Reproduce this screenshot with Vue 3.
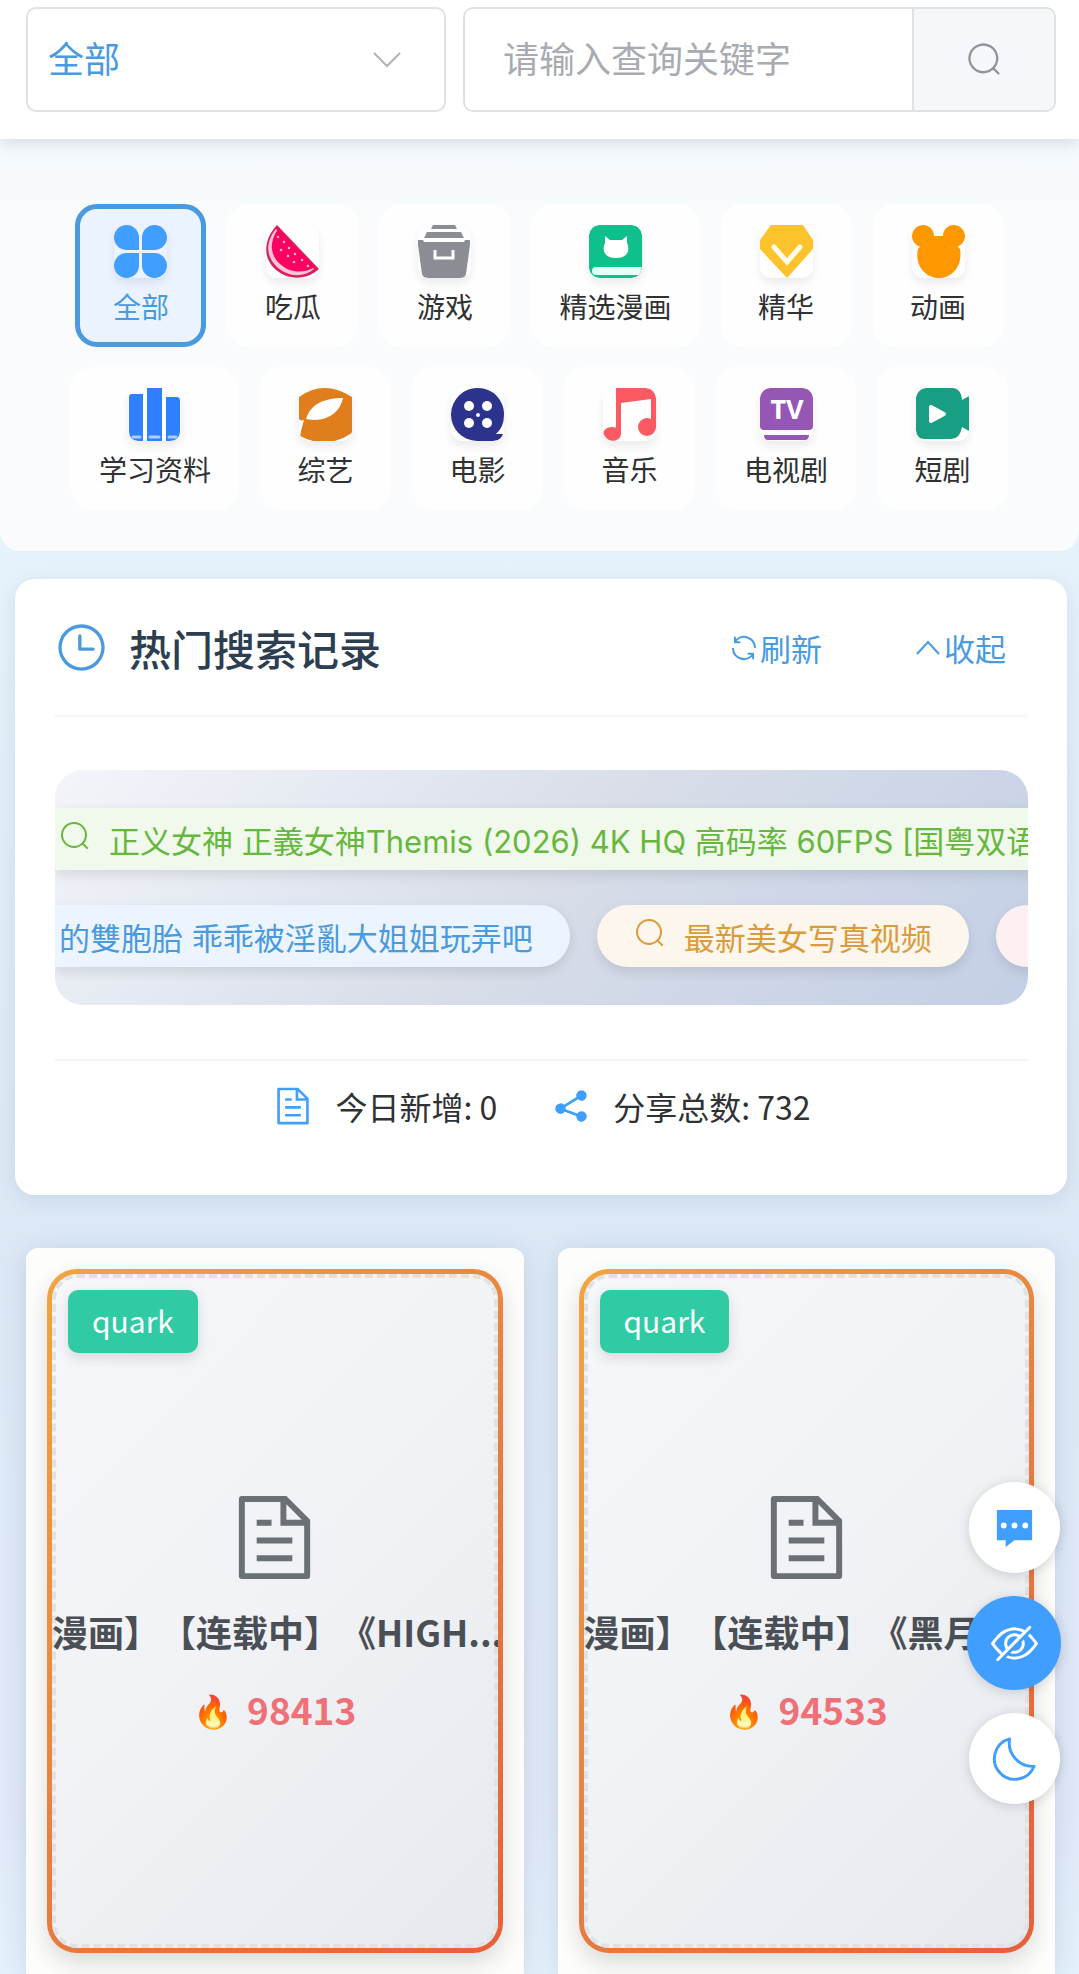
<template>
  <div class="page">
    <header class="search-bar">
      <div class="type-select">
        <select v-model="searchType" aria-label="分类">
          <option value="all">全部</option>
          <option v-for="c in categories.slice(1)" :key="c.icon" :value="c.icon">{{ c.name }}</option>
        </select>
        <svg class="select-arrow" viewBox="0 0 32 32"><path d="M3 9l13 13L29 9" /></svg>
      </div>
      <form class="search-box" @submit.prevent>
        <input v-model="keyword" type="text" placeholder="请输入查询关键字" aria-label="查询关键字">
        <button type="submit" aria-label="搜索">
          <svg viewBox="0 0 1024 1024"><path :d="paths.search" /></svg>
        </button>
      </form>
    </header>

    <nav class="categories">
      <button
        v-for="c in categories"
        :key="c.icon"
        class="category"
        :class="{ active: c.icon === current }"
        @click="current = c.icon"
      >
        <svg v-if="c.icon === 'all'" class="category-icon" viewBox="0 0 53 53" fill="#409eff">
          <path d="M25 25H12A12.500 12.500 0 1 1 25 12zM28 25V12A12.500 12.500 0 1 1 41 25zM25 28V41A12.500 12.500 0 1 1 12 28zM28 28H41A12.500 12.500 0 1 1 28 41z" />
        </svg>
        <svg v-else-if="c.icon === 'melon'" class="category-icon" viewBox="0 0 53 53">
          <path d="M11 0C-3 15-3 33 9 44s31 12 44 0z" fill="#d81e5b" />
          <path d="M10 4C-1 17 0 32 11 42s26 11 37 2z" fill="#ffc4d6" />
          <path d="M12 4C3 17 4 30 14 39s23 10 35 3z" fill="#fb0060" />
          <g fill="#ffb3cd">
            <circle cx="12" cy="12" r="1.300" /><circle cx="18" cy="17" r="1.300" /><circle cx="15" cy="25" r="1.300" />
            <circle cx="23" cy="23" r="1.300" /><circle cx="22" cy="31" r="1.300" /><circle cx="29" cy="29" r="1.300" />
            <circle cx="28" cy="37" r="1.300" /><circle cx="36" cy="35" r="1.300" /><circle cx="42" cy="41" r="1.300" />
          </g>
        </svg>
        <svg v-else-if="c.icon === 'game'" class="category-icon" viewBox="0 0 53 53" fill="#8a8e94">
          <path d="M15 0H37L39 4H13zM9 7H43L46 13H6z" />
          <path d="M6 13H46V16H6z" fill="#fff" />
          <path d="M0 15H5L6 17H46L47 15H52V20L48 49Q47 53 43 53H9Q5 53 4 49L0 20z" />
          <path d="M17 25V33H35V25" fill="none" stroke="#fff" stroke-width="3" />
        </svg>
        <svg v-else-if="c.icon === 'comic'" class="category-icon" viewBox="0 0 53 53">
          <rect width="53" height="53" rx="10" fill="#0fbf8c" />
          <path d="M16 11L21 15H33L38 11V18C42 27 37 33 27 33S12 27 16 18z" fill="#fff" />
          <path d="M53 42H7a4 4 0 0 0 0 8H51" fill="#e6fff6" />
        </svg>
        <svg v-else-if="c.icon === 'best'" class="category-icon" viewBox="0 0 53 53">
          <path d="M11 0H43L53 15V24L27 53L0 24V15z" fill="#fcc32c" />
          <path d="M14 22L27 37L40 22" fill="none" stroke="#fffbe8" stroke-width="5" stroke-linecap="round" />
        </svg>
        <svg v-else-if="c.icon === 'anime'" class="category-icon" viewBox="0 0 53 53" fill="#ff9800">
          <circle cx="11" cy="11" r="11" /><circle cx="42" cy="11" r="11" />
          <path d="M17 11H36L48 24C51 42 39 53 27 53S2 42 6 24z" />
        </svg>
        <svg v-else-if="c.icon === 'study'" class="category-icon" viewBox="0 0 53 53" fill="#2f80ff">
          <path d="M4 6H15V53H10Q1 53 1 43V9Q1 6 4 6zM19 0H34V53H19zM38 9H49Q52 9 52 13V43Q52 53 42 53H38z" />
          <path d="M5 49H12M22 49H31M41 49H48" stroke="#a9d0ff" stroke-width="3" stroke-linecap="round" />
        </svg>
        <svg v-else-if="c.icon === 'variety'" class="category-icon" viewBox="0 0 53 53">
          <path d="M0 9Q25-9 53 9V45Q28 62 1 48L4 34L0 31z" fill="#e07d1d" />
          <path d="M7 31C12 15 27 10 44 10C41 25 27 35 7 31zM0 33L5 32L2 42z" fill="#fff" />
        </svg>
        <svg v-else-if="c.icon === 'movie'" class="category-icon" viewBox="0 0 53 53">
          <path d="M27 0A26 26 0 0 1 53 27Q53 39 45 46H52Q51 53 42 53H26A26 26 0 0 1 27 0z" fill="#2b338c" />
          <g fill="#fff">
            <circle cx="18" cy="18" r="5" /><circle cx="36" cy="18" r="5" />
            <circle cx="18" cy="35" r="5" /><circle cx="36" cy="35" r="5" /><circle cx="27" cy="27" r="2" />
          </g>
        </svg>
        <svg v-else-if="c.icon === 'music'" class="category-icon" viewBox="0 0 53 53" fill="#fc5a62">
          <path d="M13 0H43Q53 0 53 10V40H48V11L18 15V46H13z" />
          <ellipse cx="9" cy="46" rx="9" ry="7" /><circle cx="44" cy="39" r="9" />
        </svg>
        <svg v-else-if="c.icon === 'tv'" class="category-icon" viewBox="0 0 53 53">
          <path d="M10 0H43Q53 0 53 10V38Q53 42 49 42H4Q0 42 0 38V10Q0 0 10 0zM4 47H49Q49 52 45 52H8Q4 52 4 47z" fill="#9556b4" />
          <text x="27" y="31" class="tv-text">TV</text>
        </svg>
        <svg v-else class="category-icon" viewBox="0 0 53 53">
          <path d="M9 0H36Q45 0 46 12L53 8V43L46 39Q44 51 35 51H9Q0 51 0 42V9Q0 0 9 0z" fill="#179e83" />
          <path d="M15 19L28 26L15 33z" fill="#fff" stroke="#fff" stroke-width="4" stroke-linejoin="round" />
        </svg>
        <span>{{ c.name }}</span>
      </button>
    </nav>

    <section class="hot">
      <div class="hot-header">
        <svg class="hot-clock" viewBox="0 0 1024 1024"><path :d="paths.clock" /></svg>
        <h2>热门搜索记录</h2>
        <button class="text-btn">
          <svg viewBox="0 0 1024 1024"><path :d="paths.refresh" /></svg>刷新
        </button>
        <button class="text-btn">
          <svg class="arrow-up" viewBox="0 0 32 32"><path d="M5 22L16 10L27 22" /></svg>收起
        </button>
      </div>
      <div class="marquee">
        <div class="marquee-row">
          <a href="#" class="tag green">
            <svg viewBox="0 0 1024 1024"><path :d="paths.search" /></svg>
            <span>正义女神 正義女神Themis (2026) 4K HQ 高码率 60FPS [国粤双语]</span>
          </a>
        </div>
        <div class="marquee-row">
          <a href="#" class="tag blue"><span>的雙胞胎 乖乖被淫亂大姐姐玩弄吧</span></a>
          <a href="#" class="tag orange">
            <svg viewBox="0 0 1024 1024"><path :d="paths.search" /></svg>
            <span>最新美女写真视频</span>
          </a>
          <a href="#" class="tag red" aria-label="更多"></a>
        </div>
      </div>
      <div class="stats">
        <div class="stat">
          <svg viewBox="0 0 1024 1024"><path :d="paths.document" /></svg>
          <span>今日新增: {{ todayCount }}</span>
        </div>
        <div class="stat">
          <svg viewBox="0 0 1024 1024"><path :d="paths.share" /></svg>
          <span>分享总数: {{ shareCount }}</span>
        </div>
      </div>
    </section>

    <main class="resources">
      <article v-for="r in resources" :key="r.id" class="resource">
        <div class="cover">
          <span class="badge">{{ r.source }}</span>
          <svg class="cover-icon" viewBox="0 0 1024 1024"><path :d="paths.document" /></svg>
          <h3>{{ r.title }}</h3>
          <p class="heat"><span class="fire">🔥</span>{{ r.heat }}</p>
        </div>
      </article>
    </main>

    <div class="float-actions">
      <button class="float-btn" aria-label="留言">
        <svg viewBox="0 0 48 48">
          <path d="M6 6H42V37H24L15 44V37H6z" />
          <g fill="#fff"><circle cx="13" cy="22" r="3" /><circle cx="24" cy="22" r="3" /><circle cx="35" cy="22" r="3" /></g>
        </svg>
      </button>
      <button class="float-btn primary" aria-label="隐藏图片">
        <svg viewBox="0 0 1024 1024"><path :d="paths.hide" /></svg>
      </button>
      <button class="float-btn" aria-label="夜间模式">
        <svg class="moon" viewBox="0 0 48 48"><path d="M19 4A21 21 0 1 0 44 32A24 24 0 0 1 19 4z" /></svg>
      </button>
    </div>
  </div>
</template>

<script setup>
import { ref } from 'vue'

const searchType = ref('all')
const keyword = ref('')
const current = ref('all')
const todayCount = ref(0)
const shareCount = ref(732)

const categories = [
  { icon: 'all', name: '全部' },
  { icon: 'melon', name: '吃瓜' },
  { icon: 'game', name: '游戏' },
  { icon: 'comic', name: '精选漫画' },
  { icon: 'best', name: '精华' },
  { icon: 'anime', name: '动画' },
  { icon: 'study', name: '学习资料' },
  { icon: 'variety', name: '综艺' },
  { icon: 'movie', name: '电影' },
  { icon: 'music', name: '音乐' },
  { icon: 'tv', name: '电视剧' },
  { icon: 'short', name: '短剧' }
]

const resources = [
  { id: 1, source: 'quark', title: '漫画】【连载中】《HIGH...', heat: 98413 },
  { id: 2, source: 'quark', title: '漫画】【连载中】《黑月...', heat: 94533 }
]

const paths = {
  search: 'M795.904 750.720l124.992 124.928a32 32 0 0 1-45.248 45.248L750.656 795.904a416 416 0 1 1 45.248-45.248zM480 832a352 352 0 1 0 0-704 352 352 0 0 0 0 704',
  clock: 'M512 896a384 384 0 1 0 0-768 384 384 0 0 0 0 768zm0 64a448 448 0 1 1 0-896 448 448 0 0 1 0 896zM480 256a32 32 0 0 1 32 32v224h224a32 32 0 0 1 0 64H480a32 32 0 0 1-32-32V288a32 32 0 0 1 32-32z',
  refresh: 'M771.776 794.880A384 384 0 0 1 128 512h64a320 320 0 0 0 555.712 216.448H654.720a32 32 0 1 1 0-64h149.056a32 32 0 0 1 32 32v148.928a32 32 0 1 1-64 0v-50.560zM276.288 295.616h92.992a32 32 0 0 1 0 64H220.160a32 32 0 0 1-32-32V178.560a32 32 0 0 1 64 0v50.560A384 384 0 0 1 896.128 512h-64a320 320 0 0 0-555.776-216.384z',
  document: 'M832 384H576V128H192v768h640V384zm-26.496-64L640 154.496V320h165.504zM160 64h480l256 256v608a32 32 0 0 1-32 32H160a32 32 0 0 1-32-32V96a32 32 0 0 1 32-32zm160 448h384v64H320v-64zm0-192h160v64H320v-64zm0 384h384v64H320v-64z',
  share: 'M679.872 348.800l-301.760 188.608a127.808 127.808 0 0 1 5.120 52.160l279.936 104.960a128 128 0 1 1-22.464 59.904l-279.872-104.960a128 128 0 1 1-16.640-166.272l301.696-188.608a128 128 0 1 1 33.920 54.272z',
  hide: 'M876.800 156.800c0-9.600-3.200-16-9.600-22.400-6.400-6.400-12.800-9.600-22.400-9.600-9.600 0-16 3.200-22.400 9.600L736 220.800c-64-32-137.600-51.200-224-60.800-160 16-288 73.600-377.600 176C44.800 438.400 0 496 0 512s48 73.600 134.400 176c22.400 25.600 44.800 48 73.600 67.200l-86.400 89.600c-6.400 6.400-9.600 12.800-9.600 22.400 0 9.600 3.200 16 9.600 22.400 6.400 6.400 12.800 9.600 22.400 9.600 9.600 0 16-3.200 22.400-9.600l704-710.400c3.200-6.400 6.400-12.800 6.400-22.400zm-646.400 528c-76.800-70.400-128-128-153.600-172.800 28.800-48 80-105.600 153.600-172.800C304 272 400 230.400 512 224c64 3.200 124.800 19.200 176 44.800l-54.400 54.400C598.400 300.800 560 288 512 288c-64 0-115.200 22.400-160 64s-64 96-64 160c0 48 12.800 89.600 35.200 124.800L256 707.200c-9.600-6.400-19.200-16-25.600-22.400zm140.800-96c-12.800-22.400-19.200-48-19.200-76.800 0-44.800 16-83.200 48-112 32-28.800 67.200-48 112-48 28.800 0 54.400 6.400 73.600 19.200L371.200 588.800zM889.600 336c-12.800-16-28.800-28.800-41.600-41.600l-48 48c73.600 67.200 124.800 124.800 150.400 169.600-28.800 48-80 105.600-153.600 172.800-73.600 67.200-172.800 108.800-284.800 115.200-51.200-3.200-99.200-12.800-140.800-28.800l-48 48c57.600 22.400 118.400 38.400 188.800 44.800 160-16 288-73.600 377.600-176C979.200 585.600 1024 528 1024 512s-48-73.600-134.400-176zM512 672c-12.800 0-25.600-3.200-38.400-6.400l-51.200 51.200c28.800 12.800 57.600 19.200 89.600 19.200 64 0 115.200-22.400 160-64 41.600-41.600 64-96 64-160 0-32-6.400-64-19.200-89.600l-51.200 51.200c3.200 12.800 6.400 25.600 6.400 38.400 0 44.800-16 83.200-48 112-32 28.800-67.200 48-112 48z'
}
</script>

<style>
body {
  margin: 0;
}
</style>

<style scoped>
.page {
  min-height: 100vh;
  overflow: hidden;
  background: linear-gradient(180deg, #e8f4fc 0%, #e6f2fb 28%, #dce8f5 62%, #e1e9f8 92%, #e4f1fc 100%);
  font-family: "Noto Sans CJK SC", "Noto Sans", sans-serif;
  color: #303133;
  fill: currentColor;
  text-spacing-trim: space-all;
}
.page * {
  box-sizing: border-box;
}
button,
input,
select {
  font-family: inherit;
  margin: 0;
}
button {
  cursor: pointer;
}
svg {
  flex-shrink: 0;
}

/* search bar */
.search-bar {
  position: relative;
  display: flex;
  gap: 17px;
  padding: 7px 23px 27px 26px;
  background: #fff;
  box-shadow: 0 4px 16px rgba(0, 0, 0, 0.12);
}
.type-select {
  position: relative;
  flex: 422;
}
.type-select select {
  width: 100%;
  height: 105px;
  padding: 0 20px 6px;
  border: 2px solid #dfe1e4;
  border-radius: 10px;
  background: #fff;
  color: #4a9ae0;
  font-size: 36px;
  appearance: none;
}
.select-arrow {
  position: absolute;
  top: 37px;
  right: 43px;
  width: 32px;
  fill: none;
  stroke: #b0b3b8;
  stroke-width: 2;
}
.search-box {
  flex: 592;
  display: flex;
  height: 105px;
  border: 2px solid #dfe1e4;
  border-radius: 10px;
  overflow: hidden;
}
.search-box input {
  flex: 1;
  min-width: 0;
  padding: 0 38px 6px;
  border: none;
  outline: none;
  background: #fff;
  font-size: 36px;
}
.search-box input::placeholder {
  color: #a8abb2;
}
.search-box button {
  display: flex;
  align-items: center;
  justify-content: center;
  width: 142px;
  border: none;
  border-left: 2px solid #dfe1e4;
  background: #f5f7fa;
  color: #909399;
}
.search-box button svg {
  width: 37px;
}

/* categories */
.categories {
  display: flex;
  flex-wrap: wrap;
  justify-content: center;
  gap: 20px 21px;
  padding: 65px 60px 41px;
  border-radius: 0 0 20px 20px;
  background: linear-gradient(180deg, #f4f9fd 0%, #f9fbfc 20%, #f9fbfd 100%);
}
.category {
  display: flex;
  flex-direction: column;
  align-items: center;
  gap: 7px;
  min-width: 131px;
  height: 143px;
  padding: 16px 23px;
  border: 5px solid transparent;
  border-radius: 22px;
  background: #fefefe;
  background-clip: border-box;
  color: #303133;
  font-size: 28px;
  line-height: 42px;
}
.category.active {
  border-color: #4a9ae0;
  background: #eaf3ff;
  color: #4a9ae0;
}
.category-icon {
  width: 53px;
  height: 53px;
  border-radius: 11px;
  box-shadow: 0 5px 10px rgba(0, 0, 0, 0.08);
}
.tv-text {
  fill: #fff;
  font-family: "Noto Sans", sans-serif;
  font-size: 27px;
  font-weight: 700;
  text-anchor: middle;
}

/* hot searches */
.hot {
  margin: 28px 12px 0 15px;
  padding: 30px 39px 66px 40px;
  border-radius: 20px;
  background: #fff;
  box-shadow: 0 4px 20px rgba(60, 80, 120, 0.12);
}
.hot-header {
  display: flex;
  align-items: center;
  height: 109px;
  padding-bottom: 28px;
  border-bottom: 4px solid #f7f8f9;
}
.hot-clock {
  width: 53px;
  color: #4a9ae0;
}
.hot-header h2 {
  flex: 1;
  margin: 0 0 0 21px;
  color: #2c3e50;
  font-size: 42px;
  font-weight: 500;
  line-height: 60px;
}
.text-btn {
  display: flex;
  align-items: center;
  margin-left: 46px;
  padding: 0 22px;
  border: none;
  background: none;
  color: #4a9ae0;
  font-size: 31px;
  line-height: 46px;
}
.text-btn svg {
  width: 32px;
}
.arrow-up {
  fill: none;
  stroke: currentColor;
  stroke-width: 2;
}
.marquee {
  display: flex;
  flex-direction: column;
  gap: 35px;
  margin-top: 52px;
  padding: 38px 0;
  border-radius: 28px;
  overflow: hidden;
  background: linear-gradient(135deg, #f3f5fa 0%, #d8dde8 50%, #c3cfe6 100%);
}
.marquee-row {
  display: flex;
  gap: 27px;
}
.tag {
  display: flex;
  flex-shrink: 0;
  align-items: center;
  height: 62px;
  padding: 0 37px;
  border-radius: 32px;
  font-family: Inter, "Noto Sans CJK SC", sans-serif;
  font-size: 31px;
  line-height: 46px;
  white-space: nowrap;
  text-decoration: none;
  box-shadow: 0 5px 12px rgba(0, 0, 0, 0.1);
}
.tag svg {
  width: 32px;
  margin: 0 18px 6px 0;
}
.tag span {
  padding-top: 6px;
}
.tag.green {
  padding-left: 4px;
  border-radius: 0;
  background: #f0f9eb;
  color: #67b73e;
}
.tag.blue {
  padding-left: 4px;
  border-radius: 0 32px 32px 0;
  background: #ecf5ff;
  color: #4a9ae0;
}
.tag.orange {
  background: #fdf6ec;
  color: #dc9b3a;
}
.tag.red {
  width: 200px;
  background: #fef0f0;
}
.stats {
  display: flex;
  justify-content: center;
  gap: 53px;
  margin-top: 54px;
  padding-top: 22px;
  border-top: 2px solid #f3f4f5;
}
.stat {
  display: flex;
  align-items: center;
  gap: 21px;
  font-size: 32px;
  line-height: 46px;
}
.stat svg {
  width: 42px;
  color: #409eff;
}

/* resources */
.resources {
  display: grid;
  grid-template-columns: 1fr 1fr;
  gap: 34px;
  padding: 53px 24px 0 26px;
}
.resource {
  min-width: 0;
  padding: 21px;
  border-radius: 12px 12px 0 0;
  background: #fdfdfc;
  box-shadow: 0 4px 24px rgba(60, 80, 120, 0.16);
}
.cover {
  position: relative;
  display: flex;
  flex-direction: column;
  align-items: center;
  height: 684px;
  padding-top: 216px;
  border: 5px solid transparent;
  border-radius: 30px;
  background:
    linear-gradient(135deg, #f5f7fa 0%, #f0f2f5 50%, #e6e9ee 100%) padding-box,
    linear-gradient(135deg, #f2a53f 0%, #e8803f 50%, #e5603c 100%) border-box;
  box-shadow: 0 10px 24px rgba(0, 0, 0, 0.14);
}
.cover::before {
  content: "";
  position: absolute;
  inset: 0;
  border: 4px dashed #e0e1e3;
  border-radius: 25px;
}
.badge {
  position: absolute;
  top: 16px;
  left: 16px;
  padding: 0 24px 2px;
  border-radius: 10px;
  background: #30cba5;
  color: #fff;
  font-size: 30px;
  line-height: 61px;
  box-shadow: 0 5px 14px rgba(0, 0, 0, 0.12);
}
.cover-icon {
  width: 95px;
  height: 95px;
  color: #6b7075;
}
.cover h3 {
  position: relative;
  width: 100%;
  margin: 18px 0 0;
  overflow: hidden;
  color: #4a4f55;
  font-size: 36px;
  font-weight: 700;
  line-height: 56px;
  white-space: nowrap;
}
.heat {
  display: flex;
  align-items: center;
  gap: 14px;
  margin: 19px 0 0;
  color: #f07078;
  font-size: 37px;
  font-weight: 700;
  line-height: 56px;
}
.fire {
  padding-top: 6px;
  font-family: "Noto Color Emoji", sans-serif;
  font-size: 32px;
}

/* floating buttons */
.float-actions {
  position: fixed;
  right: 18px;
  bottom: 170px;
  display: flex;
  flex-direction: column;
  align-items: center;
  gap: 23px;
}
.float-btn {
  display: flex;
  align-items: center;
  justify-content: center;
  width: 91px;
  height: 91px;
  padding: 0;
  border: none;
  border-radius: 50%;
  background: #fff;
  color: #409eff;
  box-shadow: 0 2px 12px rgba(0, 0, 0, 0.15);
}
.float-btn.primary {
  width: 94px;
  height: 94px;
  background: #409eff;
  color: #fff;
}
.float-btn svg {
  width: 47px;
}
.moon {
  fill: none;
  stroke: currentColor;
  stroke-width: 3;
  stroke-linejoin: round;
}
</style>
